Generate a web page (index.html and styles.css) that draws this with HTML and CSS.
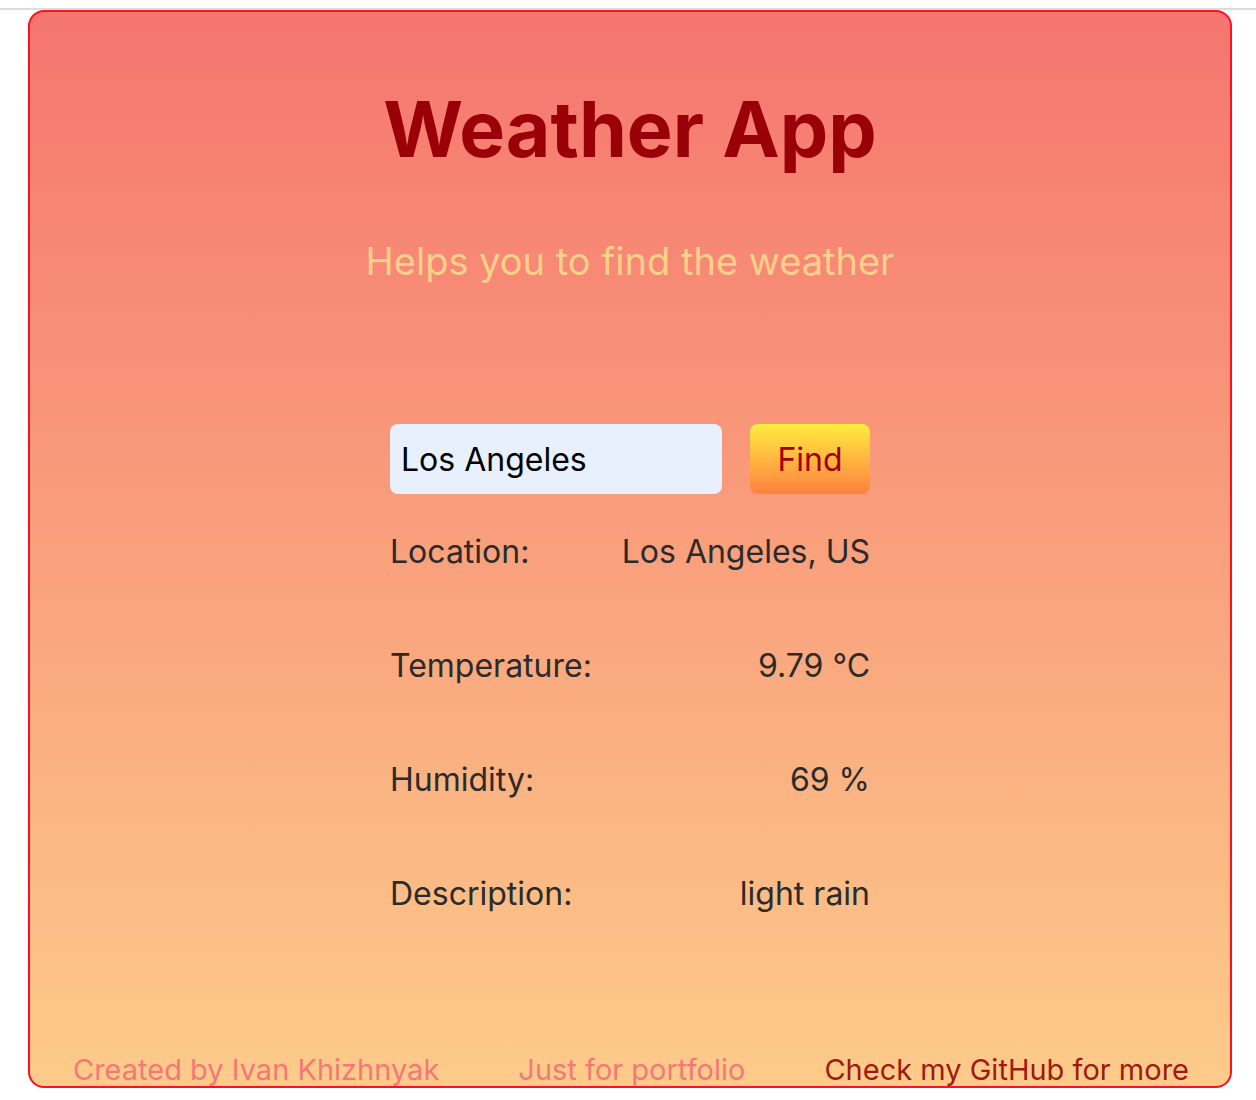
FILE: index.html
```html
<!DOCTYPE html>
<html>
<head>
<meta charset="utf-8">
<link rel="stylesheet" href="styles.css">
</head>
<body>
<div class="page">
  <div class="card">
    <h1 class="title">Weather App</h1>
    <p class="subtitle">Helps you to find the weather</p>
    <div class="content">
      <form class="search">
        <input class="search-input" type="text" value="Los Angeles">
        <button class="search-btn" type="button">Find</button>
      </form>
      <div class="row"><span>Location:</span><span>Los Angeles, US</span></div>
      <div class="row"><span>Temperature:</span><span>9.79 °C</span></div>
      <div class="row"><span>Humidity:</span><span>69 %</span></div>
      <div class="row"><span>Description:</span><span>light rain</span></div>
    </div>
    <div class="footer">
      <span class="foot-light">Created by Ivan Khizhnyak</span>
      <span class="foot-light">Just for portfolio</span>
      <span class="foot-dark">Check my GitHub for more</span>
    </div>
  </div>
</div>
</body>
</html>
```
FILE: styles.css
```css
html, body {
  margin: 0;
  padding: 0;
  background: #fff;
  font-family: Inter, "Noto Sans", sans-serif;
}
.page {
  padding-top: 8px;
}
.page::before {
  content: "";
  display: block;
  height: 2px;
  background: #dcdcdc;
}
.card {
  box-sizing: border-box;
  margin-left: 28px;
  width: 1204px;
  height: 1078px;
  border: 2px solid #ff1020;
  border-radius: 16px;
  background: linear-gradient(to bottom, #f5756f 0%, #fdcb8a 100%);
  overflow: hidden;
  display: flex;
  flex-direction: column;
  align-items: center;
}
.title {
  margin: 77px 0 0;
  font-size: 77px;
  line-height: 80px;
  font-weight: 700;
  color: #990008;
}
.subtitle {
  margin: 72px 0 0;
  font-size: 38px;
  line-height: 40px;
  color: #ffd08a;
}
.content {
  margin-top: 143px;
  width: 480px;
  display: flex;
  flex-direction: column;
}
.search {
  display: flex;
  justify-content: space-between;
  margin: 0 0 38px;
}
.search-input {
  box-sizing: border-box;
  width: 332px;
  height: 70px;
  border: none;
  border-radius: 8px;
  background: #e8f0fe;
  padding: 0 11px;
  font-family: Inter, sans-serif;
  font-size: 32px;
  color: #000;
  outline: none;
}
.search-btn {
  width: 120px;
  height: 70px;
  border: none;
  border-radius: 8px;
  background: linear-gradient(to bottom, #ffec40 0%, #ff8042 100%);
  font-family: Inter, sans-serif;
  font-size: 32px;
  color: #a00008;
  padding: 0;
}
.row {
  display: flex;
  justify-content: space-between;
  font-size: 32px;
  line-height: 40px;
  color: #2b2b2b;
  height: 114px;
}
.footer {
  margin-top: auto;
  width: 100%;
  box-sizing: border-box;
  padding: 0 41px 0 43px;
  display: flex;
  justify-content: space-between;
  font-size: 29px;
  line-height: 36px;
  height: 36px;
  margin-bottom: -2px;
}
.foot-light { color: #f57878; }
.foot-dark { color: #a01a10; }
```
